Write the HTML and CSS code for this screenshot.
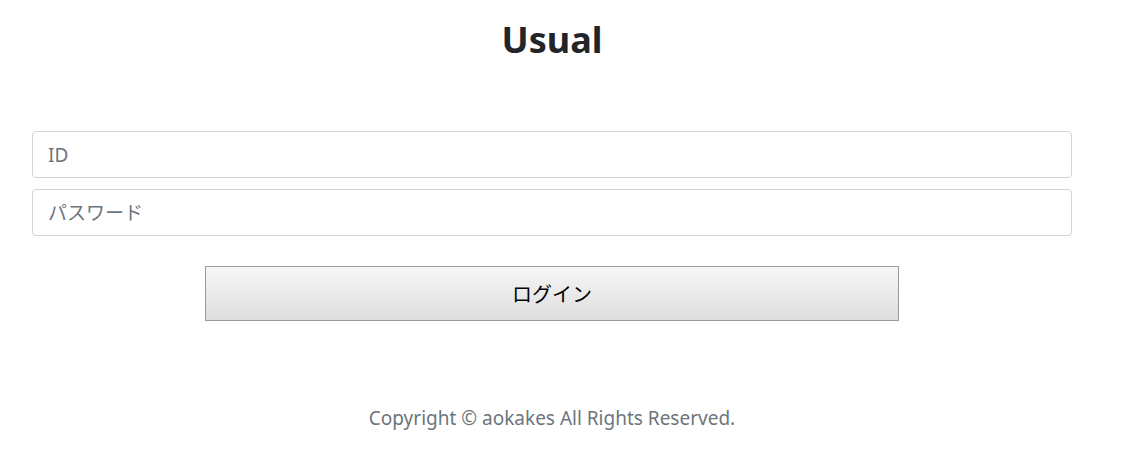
FILE: index.html
```html
<!DOCTYPE html>
<html lang="ja">
<head>
    <meta charset="UTF-8">
    <meta name="viewport" content="width=device-width, initial-scale=1.0">
    <title>Usual</title>
    <link rel="stylesheet" href="styles.css">
</head>
<body>
    <div id="main">
        <h1 id="title">Usual</h1>
        <form id="login">
            <input type="text" class="field" placeholder="ID">
            <input type="password" class="field" placeholder="パスワード">
            <div id="submit">
                <button type="button">ログイン</button>
            </div>
        </form>
        <footer id="footer">Copyright © aokakes All Rights Reserved.</footer>
    </div>
</body>
</html>
```

FILE: styles.css
```css
body{
    margin: 0;
    background-color: #fff;
    font-family: "Noto Sans", "Noto Sans CJK JP", sans-serif;
    color: #212529;
}

#main{
    width: 1104px;
}

#title{
    margin: 16px 0 0;
    height: 48px;
    line-height: 48px;
    text-align: center;
    font-size: 36px;
    font-weight: 700;
}

#login{
    margin: 67px 32px 0;
    display: flex;
    flex-direction: column;
    gap: 11px;
}

.field{
    height: 47px;
    padding: 0 15px;
    border: 1px solid #ced4da;
    border-radius: 4px;
    box-sizing: border-box;
    font-family: "Noto Sans", "Noto Sans CJK JP", sans-serif;
    font-size: 19px;
    color: #495057;
    outline: none;
}

.field::placeholder{
    color: #6c757d;
}

#submit{
    margin-top: 19px;
    display: flex;
    justify-content: center;
}

#submit button{
    width: 694px;
    height: 55px;
    border: 1px solid #9a9a9a;
    border-radius: 0;
    background: linear-gradient(#f6f6f6, #dddddd);
    color: #000;
    font-family: "Noto Sans CJK JP", sans-serif;
    font-size: 20px;
}

#footer{
    margin-top: 84px;
    text-align: center;
    font-size: 19px;
    color: #6c757d;
}
```
